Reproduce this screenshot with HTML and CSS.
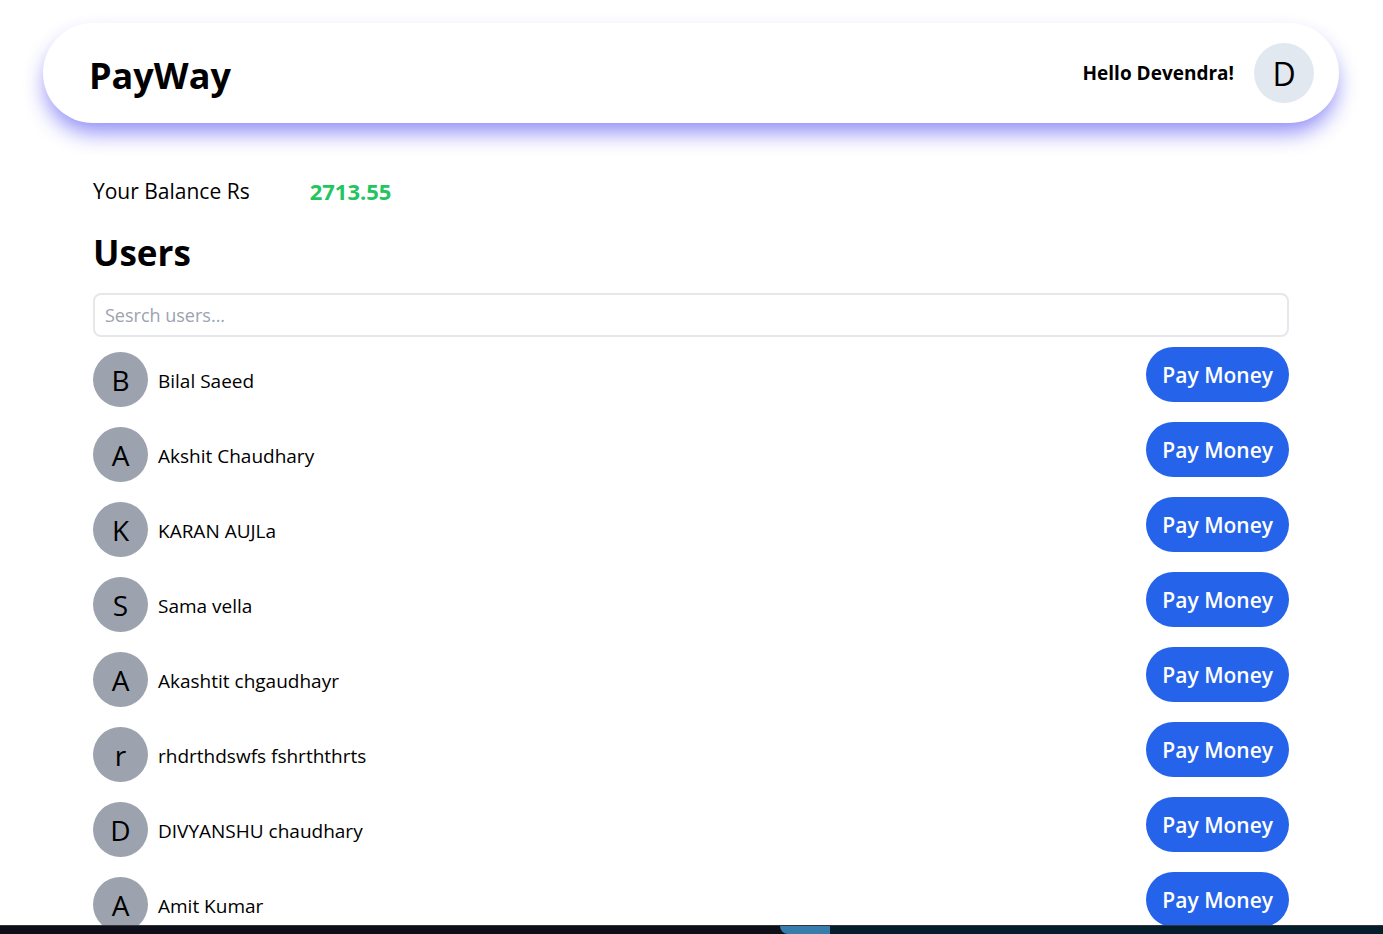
FILE: index.html
```html
<!DOCTYPE html>
<html lang="en">
<head>
<meta charset="utf-8">
<title>PayWay</title>
<link rel="stylesheet" href="styles.css">
</head>
<body>
<div class="page">
  <header class="topbar">
    <h1 class="brand">PayWay</h1>
    <div class="account">
      <span class="greeting">Hello Devendra!</span>
      <span class="avatar avatar-account">D</span>
    </div>
  </header>
  <main class="content">
    <p class="balance"><span>Your Balance Rs</span><strong class="amount">2713.55</strong></p>
    <h2 class="title">Users</h2>
    <input class="search" type="text" placeholder="Sesrch users..." aria-label="Search users">
    <ul class="users">
      <li class="user"><span class="avatar">B</span><span class="name">Bilal Saeed</span><button class="pay" type="button">Pay Money</button></li>
      <li class="user"><span class="avatar">A</span><span class="name">Akshit Chaudhary</span><button class="pay" type="button">Pay Money</button></li>
      <li class="user"><span class="avatar">K</span><span class="name">KARAN AUJLa</span><button class="pay" type="button">Pay Money</button></li>
      <li class="user"><span class="avatar">S</span><span class="name">Sama vella</span><button class="pay" type="button">Pay Money</button></li>
      <li class="user"><span class="avatar">A</span><span class="name">Akashtit chgaudhayr</span><button class="pay" type="button">Pay Money</button></li>
      <li class="user"><span class="avatar">r</span><span class="name">rhdrthdswfs fshrththrts</span><button class="pay" type="button">Pay Money</button></li>
      <li class="user"><span class="avatar">D</span><span class="name">DIVYANSHU chaudhary</span><button class="pay" type="button">Pay Money</button></li>
      <li class="user"><span class="avatar">A</span><span class="name">Amit Kumar</span><button class="pay" type="button">Pay Money</button></li>
    </ul>
  </main>
</div>
<div class="taskbar"><span class="tab"></span><span class="tab-rest"></span></div>
</body>
</html>
```
FILE: styles.css
```css
* { box-sizing: border-box; }
body {
  margin: 0;
  height: 100vh;
  display: flex;
  flex-direction: column;
  overflow: hidden;
  background: #fff;
  color: #000;
  font-family: "Segoe UI", "Open Sans", "Noto Sans", sans-serif;
}
.page {
  flex: 1;
  min-height: 0;
  overflow: hidden;
  padding: 23px 44px 0 43px;
}
.topbar {
  display: flex;
  align-items: center;
  justify-content: space-between;
  padding: 20px 25px 20px 46px;
  border-radius: 50px;
  box-shadow: 0 12px 22px -3px rgba(10, 5, 235, 0.47);
}
.brand { margin: 0; padding-top: 6px; font-size: 36px; line-height: 54px; font-weight: 700; }
.account { display: flex; align-items: center; gap: 20px; }
.greeting { font-size: 19px; font-weight: 700; }
.avatar {
  flex: none;
  display: flex;
  align-items: center;
  justify-content: center;
  width: 55px;
  height: 55px;
  border-radius: 50%;
  background: #9ca3af;
  font-size: 28px;
}
.avatar-account { width: 60px; height: 60px; background: #e2e8f0; font-size: 32px; }
.content { padding: 50px 50px 0; }
.balance { display: flex; gap: 60px; margin: 0; font-size: 21px; line-height: 36px; }
.amount { color: #22c55e; font-size: 22px; }
.title { margin: 20px 0 16px; font-size: 35px; line-height: 48px; font-weight: 700; }
.search {
  display: block;
  width: 100%;
  height: 44px;
  padding: 0 10px;
  border: 2px solid #e5e7eb;
  border-radius: 8px;
  background: #fff;
  font: inherit;
  font-size: 18px;
}
.search::placeholder { color: #9ca3af; opacity: 1; }
.users { list-style: none; margin: 10px 0 0; padding: 0; }
.user { display: flex; align-items: flex-end; gap: 10px; height: 60px; margin-bottom: 15px; }
.name { flex: 1; font-size: 19px; line-height: 52px; }
.pay {
  align-self: flex-start;
  height: 55px;
  padding: 0 16px;
  border: 0;
  border-radius: 28px;
  background: #2563eb;
  color: #fff;
  font: inherit;
  font-size: 21px;
  font-weight: 600;
}
.taskbar { flex: none; display: flex; height: 9px; background: #0d1018; border-top: 1px solid #34343c; }
.tab { width: 50px; margin-left: 56.4%; background: #367dab; border-bottom-left-radius: 8px; }
.tab-rest { flex: 1; background: #051c2b; }
```
